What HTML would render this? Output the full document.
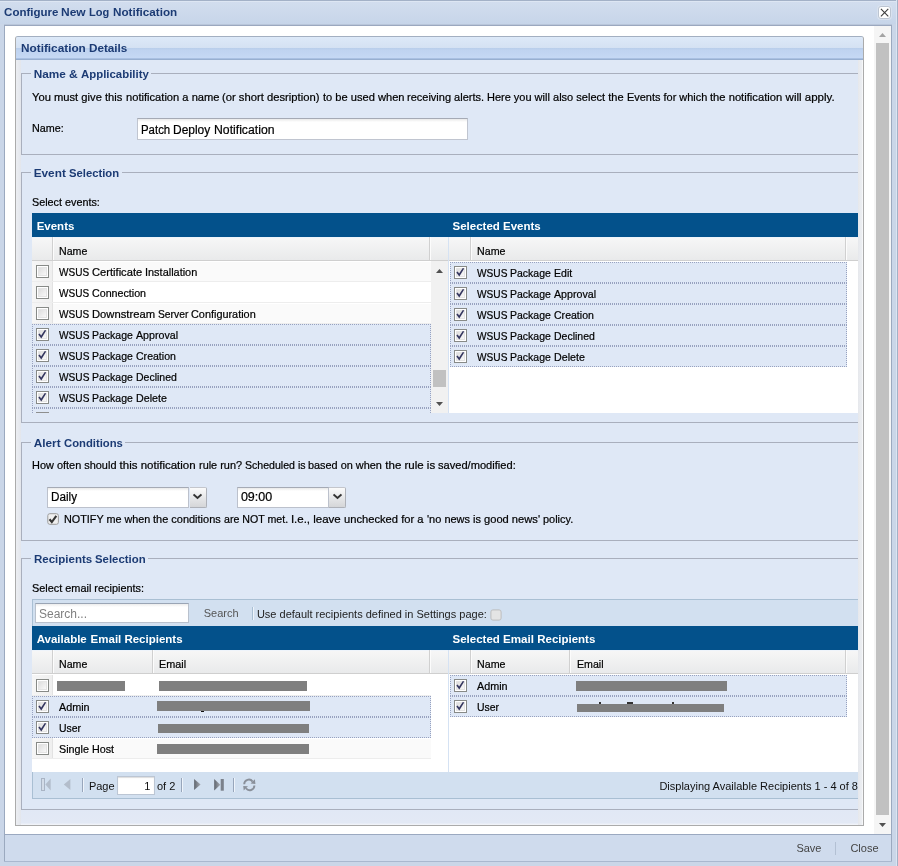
<!DOCTYPE html>
<html><head><meta charset="utf-8"><title>Configure New Log Notification</title>
<style>
html,body{margin:0;padding:0;background:#cad6e8;overflow:hidden}
#w{position:relative;width:898px;height:866px;overflow:hidden;font-family:'Liberation Sans',sans-serif;}
#w div{position:absolute}
#w span{position:absolute;will-change:opacity;transform-origin:0 0;white-space:pre;line-height:20px;height:20px;font-family:'Liberation Sans',sans-serif;}
</style></head><body><div id="w">
<div style="left:0px;top:0px;width:898px;height:866px;background:#cad6e8"></div>
<div style="left:0px;top:0px;width:898px;height:1px;background:#a3b1c7"></div>
<div style="left:0px;top:1px;width:898px;height:1px;background:#dde6f3"></div>
<div style="left:0px;top:2px;width:898px;height:22px;background:linear-gradient(#d2ddee,#c7d5e9)"></div>
<div style="left:4px;top:24px;width:888px;height:1px;background:#b9c6da"></div>
<div style="left:4px;top:25px;width:888px;height:1px;background:#9ba8bf"></div>
<div style="left:4px;top:26px;width:1px;height:836px;background:#9ba9bf"></div>
<div style="left:891px;top:26px;width:1px;height:836px;background:#9ba9bf"></div>
<div style="left:5px;top:26px;width:886px;height:808px;background:#fff"></div>
<div style="left:5px;top:834px;width:886px;height:28px;background:#cfdbed"></div>
<div style="left:5px;top:834px;width:886px;height:1px;background:#9ba9c0"></div>
<div style="left:4px;top:861px;width:888px;height:1px;background:#a9b8cf"></div>
<div style="left:896px;top:0px;width:1px;height:866px;background:#dbe5f2"></div>
<div style="left:897px;top:0px;width:1px;height:866px;background:#a3b1c7"></div>
<div style="left:877.7px;top:5.7px;width:13.6px;height:13.6px;background:#fff;border-radius:3px;border:1px solid #bcc5d2;box-sizing:border-box;box-shadow:0 0 0 1px #d9e2ef"><svg width="13" height="13" viewBox="0 0 13 13" style="position:absolute;left:-0.7px;top:-0.7px"><path d="M2.9 2.9 L10.3 10.3 M10.3 2.9 L2.9 10.3" stroke="#3c3c3c" stroke-width="1.1" fill="none"/></svg></div>
<div style="left:874px;top:26px;width:17px;height:808px;background:#f5f5f5"></div>
<div style="left:876px;top:43px;width:13px;height:772px;background:#c1c1c1"></div>
<svg style="position:absolute;left:879px;top:33px" width="7" height="4"><path d="M0 4 L3.5 0 L7 4 Z" fill="#a3a3a3"/></svg>
<svg style="position:absolute;left:879px;top:823px" width="7" height="4"><path d="M0 0 L3.5 4 L7 0 Z" fill="#505050"/></svg>
<div style="left:835px;top:842px;width:1px;height:13px;background:#b3c0d3"></div>
<div style="left:15px;top:36px;width:849px;height:790px;background:#dfe8f6;border:1px solid #ababab;border-top-color:#a3afc1;box-sizing:border-box;border-radius:3px 3px 0 0"></div>
<div style="left:16px;top:60px;width:5px;height:765px;background:linear-gradient(90deg,#eceef2,#e3e6ec)"></div>
<div style="left:858px;top:60px;width:5px;height:765px;background:linear-gradient(90deg,#e6e8ec,#eceef2 80%,#fff)"></div>
<div style="left:21px;top:810px;width:837px;height:15px;background:linear-gradient(#e1e8f5,#e3e9f5 85%,#f4f6fa)"></div>
<div style="left:16px;top:37px;width:847px;height:11px;background:linear-gradient(#dde9f8,#d4e1f3);border-radius:2px 2px 0 0"></div>
<div style="left:16px;top:48px;width:847px;height:11px;background:linear-gradient(#b8cdea,#bfd3f0 20%,#c6d9f5)"></div>
<div style="left:16px;top:58px;width:847px;height:1px;background:#a9c0e2"></div>
<div style="left:16px;top:59px;width:847px;height:1px;background:#98afd0"></div>
<div style="left:21px;top:73px;width:837px;height:82px;border:1px solid #a9afbd;border-right:none;box-sizing:border-box;background:#dfe8f6"></div>
<div style="left:31.299999999999997px;top:71px;width:120.2px;height:5px;background:#dfe8f6"></div>
<div style="left:21px;top:172px;width:837px;height:251px;border:1px solid #a9afbd;border-right:none;box-sizing:border-box;background:#dfe8f6"></div>
<div style="left:31.299999999999997px;top:170px;width:90.7px;height:5px;background:#dfe8f6"></div>
<div style="left:21px;top:441.5px;width:837px;height:99.5px;border:1px solid #a9afbd;border-right:none;box-sizing:border-box;background:#dfe8f6"></div>
<div style="left:31.299999999999997px;top:439.5px;width:93.95px;height:5px;background:#dfe8f6"></div>
<div style="left:21px;top:558px;width:837px;height:252px;border:1px solid #a9afbd;border-right:none;box-sizing:border-box;background:#dfe8f6"></div>
<div style="left:31.299999999999997px;top:556px;width:116.95px;height:5px;background:#dfe8f6"></div>
<div style="left:137px;top:118px;width:331px;height:22px;background:linear-gradient(#e9e9e9,#fff 3px);border:1px solid #c0c5d0;border-top-color:#a5aab5;box-sizing:border-box"></div>
<div style="left:32px;top:237px;width:826px;height:176px;background:#fff"></div>
<div style="left:32px;top:213px;width:826px;height:24px;background:#03518b"></div>
<div style="left:32px;top:237px;width:416px;height:24px;background:linear-gradient(#f7f7f7,#e9eaeb);border-bottom:1px solid #cfcfcf;box-sizing:border-box"></div>
<div style="left:32px;top:237px;width:416px;height:1px;background:#eef4fb"></div>
<div style="left:52px;top:237px;width:1px;height:23px;background:#d0d0d0"></div>
<div style="left:53px;top:237px;width:1px;height:23px;background:#fcfcfc"></div>
<div style="left:429px;top:237px;width:1px;height:23px;background:#d0d0d0"></div>
<div style="left:430px;top:237px;width:1px;height:23px;background:#fcfcfc"></div>
<div style="left:32px;top:261px;width:399px;height:21px;background:#fafafa;border-top:1px solid #fff;border-bottom:1px solid #ededed;box-sizing:border-box"></div>
<div style="left:32px;top:261px;width:21px;height:20px;background:linear-gradient(90deg,#f6f6f6,#efefef);border-right:1px solid #e2e2e2;box-sizing:border-box"></div>
<svg style="position:absolute;left:36px;top:265px" width="13" height="13" viewBox="0 0 13 13"><defs><linearGradient id="cg" x1="0" y1="0" x2="1" y2="1"><stop offset="0" stop-color="#dcdcdc"/><stop offset="1" stop-color="#fafafa"/></linearGradient></defs><rect x="0.5" y="0.5" width="12" height="12" fill="#fff" stroke="#878a87"/><rect x="2.5" y="2.5" width="8" height="8" fill="url(#cg)" stroke="#e4e4e4"/></svg>
<div style="left:32px;top:282px;width:399px;height:21px;background:#fff;border-top:1px solid #fff;border-bottom:1px solid #ededed;box-sizing:border-box"></div>
<div style="left:32px;top:282px;width:21px;height:20px;background:linear-gradient(90deg,#f6f6f6,#efefef);border-right:1px solid #e2e2e2;box-sizing:border-box"></div>
<svg style="position:absolute;left:36px;top:286px" width="13" height="13" viewBox="0 0 13 13"><defs><linearGradient id="cg" x1="0" y1="0" x2="1" y2="1"><stop offset="0" stop-color="#dcdcdc"/><stop offset="1" stop-color="#fafafa"/></linearGradient></defs><rect x="0.5" y="0.5" width="12" height="12" fill="#fff" stroke="#878a87"/><rect x="2.5" y="2.5" width="8" height="8" fill="url(#cg)" stroke="#e4e4e4"/></svg>
<div style="left:32px;top:303px;width:399px;height:21px;background:#fafafa;border-top:1px solid #fff;border-bottom:1px solid #ededed;box-sizing:border-box"></div>
<div style="left:32px;top:303px;width:21px;height:20px;background:linear-gradient(90deg,#f6f6f6,#efefef);border-right:1px solid #e2e2e2;box-sizing:border-box"></div>
<svg style="position:absolute;left:36px;top:307px" width="13" height="13" viewBox="0 0 13 13"><defs><linearGradient id="cg" x1="0" y1="0" x2="1" y2="1"><stop offset="0" stop-color="#dcdcdc"/><stop offset="1" stop-color="#fafafa"/></linearGradient></defs><rect x="0.5" y="0.5" width="12" height="12" fill="#fff" stroke="#878a87"/><rect x="2.5" y="2.5" width="8" height="8" fill="url(#cg)" stroke="#e4e4e4"/></svg>
<div style="left:32px;top:324px;width:399px;height:21px;background:#dfe8f6;border:1px dotted #98a2bf;box-sizing:border-box"></div>
<svg style="position:absolute;left:36px;top:328px" width="13" height="13" viewBox="0 0 13 13"><defs><linearGradient id="cg" x1="0" y1="0" x2="1" y2="1"><stop offset="0" stop-color="#dcdcdc"/><stop offset="1" stop-color="#fafafa"/></linearGradient></defs><rect x="0.5" y="0.5" width="12" height="12" fill="#fff" stroke="#878a87"/><rect x="2.5" y="2.5" width="8" height="8" fill="url(#cg)" stroke="#e4e4e4"/><path d="M2.3 6.4 L3.7 5.4 L5.1 7.4 L8.8 1.9 L10.2 2.6 L5.3 10.5 Z" fill="#34365f"/></svg>
<div style="left:32px;top:345px;width:399px;height:21px;background:#dfe8f6;border:1px dotted #98a2bf;box-sizing:border-box"></div>
<svg style="position:absolute;left:36px;top:349px" width="13" height="13" viewBox="0 0 13 13"><defs><linearGradient id="cg" x1="0" y1="0" x2="1" y2="1"><stop offset="0" stop-color="#dcdcdc"/><stop offset="1" stop-color="#fafafa"/></linearGradient></defs><rect x="0.5" y="0.5" width="12" height="12" fill="#fff" stroke="#878a87"/><rect x="2.5" y="2.5" width="8" height="8" fill="url(#cg)" stroke="#e4e4e4"/><path d="M2.3 6.4 L3.7 5.4 L5.1 7.4 L8.8 1.9 L10.2 2.6 L5.3 10.5 Z" fill="#34365f"/></svg>
<div style="left:32px;top:366px;width:399px;height:21px;background:#dfe8f6;border:1px dotted #98a2bf;box-sizing:border-box"></div>
<svg style="position:absolute;left:36px;top:370px" width="13" height="13" viewBox="0 0 13 13"><defs><linearGradient id="cg" x1="0" y1="0" x2="1" y2="1"><stop offset="0" stop-color="#dcdcdc"/><stop offset="1" stop-color="#fafafa"/></linearGradient></defs><rect x="0.5" y="0.5" width="12" height="12" fill="#fff" stroke="#878a87"/><rect x="2.5" y="2.5" width="8" height="8" fill="url(#cg)" stroke="#e4e4e4"/><path d="M2.3 6.4 L3.7 5.4 L5.1 7.4 L8.8 1.9 L10.2 2.6 L5.3 10.5 Z" fill="#34365f"/></svg>
<div style="left:32px;top:387px;width:399px;height:21px;background:#dfe8f6;border:1px dotted #98a2bf;box-sizing:border-box"></div>
<svg style="position:absolute;left:36px;top:391px" width="13" height="13" viewBox="0 0 13 13"><defs><linearGradient id="cg" x1="0" y1="0" x2="1" y2="1"><stop offset="0" stop-color="#dcdcdc"/><stop offset="1" stop-color="#fafafa"/></linearGradient></defs><rect x="0.5" y="0.5" width="12" height="12" fill="#fff" stroke="#878a87"/><rect x="2.5" y="2.5" width="8" height="8" fill="url(#cg)" stroke="#e4e4e4"/><path d="M2.3 6.4 L3.7 5.4 L5.1 7.4 L8.8 1.9 L10.2 2.6 L5.3 10.5 Z" fill="#34365f"/></svg>
<div style="left:32px;top:408px;width:399px;height:5px;background:#dfe8f6;border-top:1px dotted #98a2bf;border-left:1px dotted #98a2bf;border-right:1px dotted #98a2bf;box-sizing:border-box"></div>
<div style="left:36px;top:412px;width:13px;height:1px;background:#8e8f8f"></div>
<div style="left:431px;top:261px;width:17px;height:152px;background:#f1f1f1"></div>
<svg style="position:absolute;left:436px;top:269px" width="7" height="4"><path d="M0 4 L3.5 0 L7 4 Z" fill="#505050"/></svg>
<svg style="position:absolute;left:436px;top:402px" width="7" height="4"><path d="M0 0 L3.5 4 L7 0 Z" fill="#505050"/></svg>
<div style="left:433px;top:370px;width:13px;height:17px;background:#c1c1c1"></div>
<div style="left:448px;top:237px;width:1px;height:176px;background:#d5e2f3"></div>
<div style="left:449px;top:237px;width:409px;height:24px;background:linear-gradient(#f7f7f7,#e9eaeb);border-bottom:1px solid #cfcfcf;box-sizing:border-box"></div>
<div style="left:449px;top:237px;width:409px;height:1px;background:#eef4fb"></div>
<div style="left:470px;top:237px;width:1px;height:23px;background:#d0d0d0"></div>
<div style="left:471px;top:237px;width:1px;height:23px;background:#fcfcfc"></div>
<div style="left:845px;top:237px;width:1px;height:23px;background:#d0d0d0"></div>
<div style="left:846px;top:237px;width:1px;height:23px;background:#fcfcfc"></div>
<div style="left:450px;top:262px;width:397px;height:21px;background:#dfe8f6;border:1px dotted #98a2bf;box-sizing:border-box"></div>
<svg style="position:absolute;left:454px;top:266px" width="13" height="13" viewBox="0 0 13 13"><defs><linearGradient id="cg" x1="0" y1="0" x2="1" y2="1"><stop offset="0" stop-color="#dcdcdc"/><stop offset="1" stop-color="#fafafa"/></linearGradient></defs><rect x="0.5" y="0.5" width="12" height="12" fill="#fff" stroke="#878a87"/><rect x="2.5" y="2.5" width="8" height="8" fill="url(#cg)" stroke="#e4e4e4"/><path d="M2.3 6.4 L3.7 5.4 L5.1 7.4 L8.8 1.9 L10.2 2.6 L5.3 10.5 Z" fill="#34365f"/></svg>
<div style="left:450px;top:283px;width:397px;height:21px;background:#dfe8f6;border:1px dotted #98a2bf;box-sizing:border-box"></div>
<svg style="position:absolute;left:454px;top:287px" width="13" height="13" viewBox="0 0 13 13"><defs><linearGradient id="cg" x1="0" y1="0" x2="1" y2="1"><stop offset="0" stop-color="#dcdcdc"/><stop offset="1" stop-color="#fafafa"/></linearGradient></defs><rect x="0.5" y="0.5" width="12" height="12" fill="#fff" stroke="#878a87"/><rect x="2.5" y="2.5" width="8" height="8" fill="url(#cg)" stroke="#e4e4e4"/><path d="M2.3 6.4 L3.7 5.4 L5.1 7.4 L8.8 1.9 L10.2 2.6 L5.3 10.5 Z" fill="#34365f"/></svg>
<div style="left:450px;top:304px;width:397px;height:21px;background:#dfe8f6;border:1px dotted #98a2bf;box-sizing:border-box"></div>
<svg style="position:absolute;left:454px;top:308px" width="13" height="13" viewBox="0 0 13 13"><defs><linearGradient id="cg" x1="0" y1="0" x2="1" y2="1"><stop offset="0" stop-color="#dcdcdc"/><stop offset="1" stop-color="#fafafa"/></linearGradient></defs><rect x="0.5" y="0.5" width="12" height="12" fill="#fff" stroke="#878a87"/><rect x="2.5" y="2.5" width="8" height="8" fill="url(#cg)" stroke="#e4e4e4"/><path d="M2.3 6.4 L3.7 5.4 L5.1 7.4 L8.8 1.9 L10.2 2.6 L5.3 10.5 Z" fill="#34365f"/></svg>
<div style="left:450px;top:325px;width:397px;height:21px;background:#dfe8f6;border:1px dotted #98a2bf;box-sizing:border-box"></div>
<svg style="position:absolute;left:454px;top:329px" width="13" height="13" viewBox="0 0 13 13"><defs><linearGradient id="cg" x1="0" y1="0" x2="1" y2="1"><stop offset="0" stop-color="#dcdcdc"/><stop offset="1" stop-color="#fafafa"/></linearGradient></defs><rect x="0.5" y="0.5" width="12" height="12" fill="#fff" stroke="#878a87"/><rect x="2.5" y="2.5" width="8" height="8" fill="url(#cg)" stroke="#e4e4e4"/><path d="M2.3 6.4 L3.7 5.4 L5.1 7.4 L8.8 1.9 L10.2 2.6 L5.3 10.5 Z" fill="#34365f"/></svg>
<div style="left:450px;top:346px;width:397px;height:21px;background:#dfe8f6;border:1px dotted #98a2bf;box-sizing:border-box"></div>
<svg style="position:absolute;left:454px;top:350px" width="13" height="13" viewBox="0 0 13 13"><defs><linearGradient id="cg" x1="0" y1="0" x2="1" y2="1"><stop offset="0" stop-color="#dcdcdc"/><stop offset="1" stop-color="#fafafa"/></linearGradient></defs><rect x="0.5" y="0.5" width="12" height="12" fill="#fff" stroke="#878a87"/><rect x="2.5" y="2.5" width="8" height="8" fill="url(#cg)" stroke="#e4e4e4"/><path d="M2.3 6.4 L3.7 5.4 L5.1 7.4 L8.8 1.9 L10.2 2.6 L5.3 10.5 Z" fill="#34365f"/></svg>
<div style="left:47.2px;top:486.5px;width:142.3px;height:21px;background:linear-gradient(#e9e9e9,#fff 3px);border:1px solid #bcc1cc;border-top-color:#a5aab5;box-sizing:border-box"></div>
<div style="left:189.5px;top:486.5px;width:17px;height:21px;background:linear-gradient(#fbfbfb,#e3e4e6 60%,#d5d6d8);border:1px solid #aeb1b8;border-top-color:#c4c6cc;border-left:none;box-sizing:border-box;border-radius:0 2px 2px 0"></div>
<svg style="position:absolute;left:193.0px;top:492.5px" width="9" height="7" viewBox="0 0 9 7"><path d="M0.5 1.4 L4.5 5 L8.5 1.4" stroke="#333" stroke-width="2" fill="none"/></svg>
<div style="left:237.2px;top:486.5px;width:92px;height:21px;background:linear-gradient(#e9e9e9,#fff 3px);border:1px solid #bcc1cc;border-top-color:#a5aab5;box-sizing:border-box"></div>
<div style="left:329.2px;top:486.5px;width:17px;height:21px;background:linear-gradient(#fbfbfb,#e3e4e6 60%,#d5d6d8);border:1px solid #aeb1b8;border-top-color:#c4c6cc;border-left:none;box-sizing:border-box;border-radius:0 2px 2px 0"></div>
<svg style="position:absolute;left:332.7px;top:492.5px" width="9" height="7" viewBox="0 0 9 7"><path d="M0.5 1.4 L4.5 5 L8.5 1.4" stroke="#333" stroke-width="2" fill="none"/></svg>
<svg style="position:absolute;left:47px;top:513px" width="12" height="12" viewBox="0 0 12 12"><rect x="0.8" y="0.7" width="10.6" height="10.6" rx="2" fill="#efefef" stroke="#9c9c9c"/><path d="M2.5 6.3 L4.8 9 L9.3 2.9" stroke="#353535" stroke-width="2.1" fill="none"/></svg>
<div style="left:32px;top:599px;width:826px;height:27px;background:#d2e0f0;border-top:1px solid #a9bfd3;border-left:1px solid #a9bfd3;box-sizing:border-box"></div>
<div style="left:35px;top:603px;width:154px;height:20px;background:linear-gradient(#ececec,#fff 3px);border:1px solid #b9c1cd;border-top-color:#9aa5b5;box-sizing:border-box"></div>
<div style="left:252px;top:607px;width:1px;height:13px;background:#a9bfd3"></div>
<div style="left:253px;top:607px;width:1px;height:13px;background:#eef4fb"></div>
<svg style="position:absolute;left:490px;top:609px" width="12" height="12" viewBox="0 0 12 12"><rect x="0.9" y="0.9" width="10.2" height="10.2" rx="2" fill="#e4e4e4" stroke="#bdbdbd"/></svg>
<div style="left:32px;top:650px;width:826px;height:122px;background:#fff"></div>
<div style="left:32px;top:626px;width:826px;height:24px;background:#03518b"></div>
<div style="left:32px;top:650px;width:416px;height:24px;background:linear-gradient(#f7f7f7,#e9eaeb);border-bottom:1px solid #cfcfcf;box-sizing:border-box"></div>
<div style="left:32px;top:650px;width:416px;height:1px;background:#eef4fb"></div>
<div style="left:52px;top:650px;width:1px;height:23px;background:#d0d0d0"></div>
<div style="left:53px;top:650px;width:1px;height:23px;background:#fcfcfc"></div>
<div style="left:152px;top:650px;width:1px;height:23px;background:#d0d0d0"></div>
<div style="left:153px;top:650px;width:1px;height:23px;background:#fcfcfc"></div>
<div style="left:429px;top:650px;width:1px;height:23px;background:#d0d0d0"></div>
<div style="left:430px;top:650px;width:1px;height:23px;background:#fcfcfc"></div>
<div style="left:32px;top:675px;width:399px;height:21px;background:#fff;border-top:1px solid #fff;border-bottom:1px solid #ededed;box-sizing:border-box"></div>
<div style="left:32px;top:675px;width:21px;height:20px;background:linear-gradient(90deg,#f6f6f6,#efefef);border-right:1px solid #e2e2e2;box-sizing:border-box"></div>
<svg style="position:absolute;left:36px;top:679px" width="13" height="13" viewBox="0 0 13 13"><defs><linearGradient id="cg" x1="0" y1="0" x2="1" y2="1"><stop offset="0" stop-color="#dcdcdc"/><stop offset="1" stop-color="#fafafa"/></linearGradient></defs><rect x="0.5" y="0.5" width="12" height="12" fill="#fff" stroke="#878a87"/><rect x="2.5" y="2.5" width="8" height="8" fill="url(#cg)" stroke="#e4e4e4"/></svg>
<div style="left:57px;top:681px;width:68px;height:10px;background:#7f7f7f"></div>
<div style="left:159px;top:681px;width:148px;height:10px;background:#7f7f7f"></div>
<div style="left:32px;top:696px;width:399px;height:21px;background:#dfe8f6;border:1px dotted #98a2bf;box-sizing:border-box"></div>
<svg style="position:absolute;left:36px;top:700px" width="13" height="13" viewBox="0 0 13 13"><defs><linearGradient id="cg" x1="0" y1="0" x2="1" y2="1"><stop offset="0" stop-color="#dcdcdc"/><stop offset="1" stop-color="#fafafa"/></linearGradient></defs><rect x="0.5" y="0.5" width="12" height="12" fill="#fff" stroke="#878a87"/><rect x="2.5" y="2.5" width="8" height="8" fill="url(#cg)" stroke="#e4e4e4"/><path d="M2.3 6.4 L3.7 5.4 L5.1 7.4 L8.8 1.9 L10.2 2.6 L5.3 10.5 Z" fill="#34365f"/></svg>
<div style="left:157px;top:701px;width:153px;height:10px;background:#7f7f7f"></div>
<div style="left:32px;top:717px;width:399px;height:21px;background:#dfe8f6;border:1px dotted #98a2bf;box-sizing:border-box"></div>
<svg style="position:absolute;left:36px;top:721px" width="13" height="13" viewBox="0 0 13 13"><defs><linearGradient id="cg" x1="0" y1="0" x2="1" y2="1"><stop offset="0" stop-color="#dcdcdc"/><stop offset="1" stop-color="#fafafa"/></linearGradient></defs><rect x="0.5" y="0.5" width="12" height="12" fill="#fff" stroke="#878a87"/><rect x="2.5" y="2.5" width="8" height="8" fill="url(#cg)" stroke="#e4e4e4"/><path d="M2.3 6.4 L3.7 5.4 L5.1 7.4 L8.8 1.9 L10.2 2.6 L5.3 10.5 Z" fill="#34365f"/></svg>
<div style="left:158px;top:723.5px;width:151px;height:9.5px;background:#7f7f7f"></div>
<div style="left:32px;top:738px;width:399px;height:21px;background:#fafafa;border-top:1px solid #fff;border-bottom:1px solid #ededed;box-sizing:border-box"></div>
<div style="left:32px;top:738px;width:21px;height:20px;background:linear-gradient(90deg,#f6f6f6,#efefef);border-right:1px solid #e2e2e2;box-sizing:border-box"></div>
<svg style="position:absolute;left:36px;top:742px" width="13" height="13" viewBox="0 0 13 13"><defs><linearGradient id="cg" x1="0" y1="0" x2="1" y2="1"><stop offset="0" stop-color="#dcdcdc"/><stop offset="1" stop-color="#fafafa"/></linearGradient></defs><rect x="0.5" y="0.5" width="12" height="12" fill="#fff" stroke="#878a87"/><rect x="2.5" y="2.5" width="8" height="8" fill="url(#cg)" stroke="#e4e4e4"/></svg>
<div style="left:157px;top:744px;width:152px;height:10px;background:#7f7f7f"></div>
<div style="left:201px;top:711px;width:3px;height:1px;background:#111"></div>
<div style="left:448px;top:650px;width:1px;height:122px;background:#d5e2f3"></div>
<div style="left:449px;top:650px;width:409px;height:24px;background:linear-gradient(#f7f7f7,#e9eaeb);border-bottom:1px solid #cfcfcf;box-sizing:border-box"></div>
<div style="left:449px;top:650px;width:409px;height:1px;background:#eef4fb"></div>
<div style="left:470px;top:650px;width:1px;height:23px;background:#d0d0d0"></div>
<div style="left:471px;top:650px;width:1px;height:23px;background:#fcfcfc"></div>
<div style="left:569px;top:650px;width:1px;height:23px;background:#d0d0d0"></div>
<div style="left:570px;top:650px;width:1px;height:23px;background:#fcfcfc"></div>
<div style="left:845px;top:650px;width:1px;height:23px;background:#d0d0d0"></div>
<div style="left:846px;top:650px;width:1px;height:23px;background:#fcfcfc"></div>
<div style="left:450px;top:675px;width:397px;height:21px;background:#dfe8f6;border:1px dotted #98a2bf;box-sizing:border-box"></div>
<svg style="position:absolute;left:454px;top:679px" width="13" height="13" viewBox="0 0 13 13"><defs><linearGradient id="cg" x1="0" y1="0" x2="1" y2="1"><stop offset="0" stop-color="#dcdcdc"/><stop offset="1" stop-color="#fafafa"/></linearGradient></defs><rect x="0.5" y="0.5" width="12" height="12" fill="#fff" stroke="#878a87"/><rect x="2.5" y="2.5" width="8" height="8" fill="url(#cg)" stroke="#e4e4e4"/><path d="M2.3 6.4 L3.7 5.4 L5.1 7.4 L8.8 1.9 L10.2 2.6 L5.3 10.5 Z" fill="#34365f"/></svg>
<div style="left:576px;top:681px;width:151px;height:9.5px;background:#7f7f7f"></div>
<div style="left:450px;top:696px;width:397px;height:21px;background:#dfe8f6;border:1px dotted #98a2bf;box-sizing:border-box"></div>
<svg style="position:absolute;left:454px;top:700px" width="13" height="13" viewBox="0 0 13 13"><defs><linearGradient id="cg" x1="0" y1="0" x2="1" y2="1"><stop offset="0" stop-color="#dcdcdc"/><stop offset="1" stop-color="#fafafa"/></linearGradient></defs><rect x="0.5" y="0.5" width="12" height="12" fill="#fff" stroke="#878a87"/><rect x="2.5" y="2.5" width="8" height="8" fill="url(#cg)" stroke="#e4e4e4"/><path d="M2.3 6.4 L3.7 5.4 L5.1 7.4 L8.8 1.9 L10.2 2.6 L5.3 10.5 Z" fill="#34365f"/></svg>
<div style="left:577px;top:703.5px;width:147px;height:8.5px;background:#7f7f7f"></div>
<div style="left:599px;top:701.5px;width:2px;height:2px;background:#333"></div>
<div style="left:627px;top:701.5px;width:6px;height:2px;background:#333"></div>
<div style="left:672px;top:701.5px;width:2px;height:2px;background:#333"></div>
<div style="left:32px;top:772px;width:826px;height:27px;background:#d2e0f0;border-bottom:1px solid #a9bfd3;border-left:1px solid #a9bfd3;box-sizing:border-box"></div>
<svg style="position:absolute;left:41px;top:778px" width="10" height="13" viewBox="0 0 10 13"><rect x="0.5" y="0.5" width="3" height="12" fill="#d3dce8" stroke="#a9b4c4"/><path d="M9.7 0.5 L9.7 12.5 L4.4 6.5 Z" fill="#b3bdcb"/></svg>
<svg style="position:absolute;left:63px;top:778px" width="8" height="13" viewBox="0 0 8 13"><path d="M7.4 1 L7.4 12 L0.8 6.5 Z" fill="#b3bdcb"/></svg>
<div style="left:82px;top:778px;width:1px;height:14px;background:#98a6bb"></div>
<div style="left:83px;top:778px;width:1px;height:14px;background:#eef4fb"></div>
<div style="left:117px;top:776px;width:38px;height:19px;background:#fff;border:1px solid #bcc6d4;box-sizing:border-box;box-shadow:inset 0 1px 1px #ddd"></div>
<div style="left:181px;top:778px;width:1px;height:14px;background:#98a6bb"></div>
<div style="left:182px;top:778px;width:1px;height:14px;background:#eef4fb"></div>
<svg style="position:absolute;left:194px;top:778px" width="8" height="13" viewBox="0 0 8 13"><defs><linearGradient id="ig" x1="0" y1="0" x2="1" y2="0"><stop offset="0" stop-color="#5f656e"/><stop offset="1" stop-color="#a4a9b1"/></linearGradient></defs><path d="M0.1 1 L0.1 12 L6.6 6.5 Z" fill="url(#ig)"/></svg>
<svg style="position:absolute;left:214px;top:778px" width="10" height="13" viewBox="0 0 10 13"><path d="M0.2 1 L0.2 12.5 L6.3 6.7 Z" fill="url(#ig)"/><rect x="6.7" y="1" width="3.1" height="11.7" fill="#7b818b"/></svg>
<div style="left:233px;top:778px;width:1px;height:14px;background:#98a6bb"></div>
<div style="left:234px;top:778px;width:1px;height:14px;background:#eef4fb"></div>
<svg style="position:absolute;left:242px;top:778px" width="15" height="14" viewBox="0 0 15 14"><g fill="none" stroke="#8a909a" stroke-width="1.9"><path d="M2.2 6.2 A4.6 4.6 0 0 1 10.6 3.6"/><path d="M12.4 7.6 A4.6 4.6 0 0 1 4 10.2"/></g><path d="M8.6 5.6 L13.4 5.9 L12.9 1.2 Z" fill="#8a909a"/><path d="M6 8.2 L1.2 7.9 L1.7 12.6 Z" fill="#8a909a"/></svg>
<span style="left:4.10px;top:2.00px;font-size:11.5px;font-weight:700;color:#1c3b74;">Configure </span>
<span style="left:61.37px;top:2.00px;font-size:11.5px;font-weight:700;color:#1c3b74;transform:scaleX(1.0431);">New </span>
<span style="left:89.42px;top:2.00px;font-size:11.5px;font-weight:700;color:#1c3b74;transform:scaleX(0.9596);">Log </span>
<span style="left:112.69px;top:2.00px;font-size:11.5px;font-weight:700;color:#1c3b74;transform:scaleX(1.0160);">Notification</span>
<span style="left:796.40px;top:838.30px;font-size:11px;font-weight:400;color:#444;">Save</span>
<span style="left:850.40px;top:838.30px;font-size:11px;font-weight:400;color:#444;">Close</span>
<span style="left:20.99px;top:38.00px;font-size:11.5px;font-weight:700;color:#1c3b74;transform:scaleX(1.0248);">Notification </span>
<span style="left:89.09px;top:38.00px;font-size:11.5px;font-weight:700;color:#1c3b74;transform:scaleX(1.0171);">Details</span>
<span style="left:33.70px;top:64.00px;font-size:11.8px;font-weight:700;color:#1c3b74;">Name </span>
<span style="left:69.09px;top:64.00px;font-size:11.8px;font-weight:700;color:#1c3b74;transform:scaleX(1.0159);">&amp; </span>
<span style="left:81.12px;top:64.00px;font-size:11.8px;font-weight:700;color:#1c3b74;transform:scaleX(0.9672);">Applicability</span>
<span style="left:33.70px;top:163.00px;font-size:11.8px;font-weight:700;color:#1c3b74;">Event </span>
<span style="left:69.33px;top:163.00px;font-size:11.8px;font-weight:700;color:#1c3b74;transform:scaleX(0.9556);">Selection</span>
<span style="left:33.70px;top:432.50px;font-size:11.8px;font-weight:700;color:#1c3b74;">Alert </span>
<span style="left:63.83px;top:432.50px;font-size:11.8px;font-weight:700;color:#1c3b74;transform:scaleX(0.9556);">Conditions</span>
<span style="left:33.71px;top:549.00px;font-size:11.8px;font-weight:700;color:#1c3b74;transform:scaleX(0.9756);">Recipients </span>
<span style="left:95.12px;top:549.00px;font-size:11.8px;font-weight:700;color:#1c3b74;transform:scaleX(0.9644);">Selection</span>
<span style="left:32.12px;top:87.00px;font-size:11.5px;font-weight:400;color:#000;transform:scaleX(0.9728);-webkit-text-stroke:0.22px currentColor;">You must give this </span>
<span style="left:125.62px;top:87.00px;font-size:11.5px;font-weight:400;color:#000;transform:scaleX(0.9686);-webkit-text-stroke:0.22px currentColor;">notification a name </span>
<span style="left:222.21px;top:87.00px;font-size:11.5px;font-weight:400;color:#000;transform:scaleX(0.9766);-webkit-text-stroke:0.22px currentColor;">(or short desription) </span>
<span style="left:322.72px;top:87.00px;font-size:11.5px;font-weight:400;color:#000;transform:scaleX(0.9658);-webkit-text-stroke:0.22px currentColor;">to be used when </span>
<span style="left:407.33px;top:87.00px;font-size:11.5px;font-weight:400;color:#000;transform:scaleX(0.9566);-webkit-text-stroke:0.22px currentColor;">receiving alerts. </span>
<span style="left:487.43px;top:87.00px;font-size:11.5px;font-weight:400;color:#000;transform:scaleX(0.9546);-webkit-text-stroke:0.22px currentColor;">Here you will </span>
<span style="left:553.32px;top:87.00px;font-size:11.5px;font-weight:400;color:#000;transform:scaleX(0.9593);-webkit-text-stroke:0.22px currentColor;">also select the </span>
<span style="left:626.93px;top:87.00px;font-size:11.5px;font-weight:400;color:#000;transform:scaleX(0.9523);-webkit-text-stroke:0.22px currentColor;">Events for which </span>
<span style="left:710.32px;top:87.00px;font-size:11.5px;font-weight:400;color:#000;transform:scaleX(0.9734);-webkit-text-stroke:0.22px currentColor;">the notification </span>
<span style="left:785.60px;top:87.00px;font-size:11.5px;font-weight:400;color:#000;-webkit-text-stroke:0.22px currentColor;">will apply.</span>
<span style="left:31.94px;top:117.50px;font-size:11.5px;font-weight:400;color:#000;transform:scaleX(0.9367);-webkit-text-stroke:0.22px currentColor;">Name:</span>
<span style="left:140.75px;top:119.50px;font-size:12.5px;font-weight:400;color:#000;transform:scaleX(0.9143);-webkit-text-stroke:0.22px currentColor;">Patch </span>
<span style="left:173.13px;top:119.50px;font-size:12.5px;font-weight:400;color:#000;transform:scaleX(0.9578);-webkit-text-stroke:0.22px currentColor;">Deploy </span>
<span style="left:213.71px;top:119.50px;font-size:12.5px;font-weight:400;color:#000;transform:scaleX(0.9785);-webkit-text-stroke:0.22px currentColor;">Notification</span>
<span style="left:31.94px;top:192.00px;font-size:11.5px;font-weight:400;color:#000;transform:scaleX(0.9383);-webkit-text-stroke:0.22px currentColor;">Select events:</span>
<span style="left:36.65px;top:216.30px;font-size:11.5px;font-weight:700;color:#fff;">Events</span>
<span style="left:452.50px;top:216.30px;font-size:11.5px;font-weight:700;color:#fff;">Selected </span>
<span style="left:503.00px;top:216.30px;font-size:11.5px;font-weight:700;color:#fff;">Events</span>
<span style="left:58.85px;top:240.60px;font-size:11.5px;font-weight:400;color:#000;transform:scaleX(0.9227);-webkit-text-stroke:0.22px currentColor;">Name</span>
<span style="left:58.98px;top:262.00px;font-size:11.5px;font-weight:400;color:#000;transform:scaleX(0.8726);-webkit-text-stroke:0.22px currentColor;">WSUS </span>
<span style="left:91.82px;top:262.00px;font-size:11.5px;font-weight:400;color:#000;transform:scaleX(0.9696);-webkit-text-stroke:0.22px currentColor;">Certificate </span>
<span style="left:145.13px;top:262.00px;font-size:11.5px;font-weight:400;color:#000;transform:scaleX(0.9511);-webkit-text-stroke:0.22px currentColor;">Installation</span>
<span style="left:58.98px;top:283.00px;font-size:11.5px;font-weight:400;color:#000;transform:scaleX(0.8726);-webkit-text-stroke:0.22px currentColor;">WSUS </span>
<span style="left:91.84px;top:283.00px;font-size:11.5px;font-weight:400;color:#000;transform:scaleX(0.9293);-webkit-text-stroke:0.22px currentColor;">Connection</span>
<span style="left:58.98px;top:304.00px;font-size:11.5px;font-weight:400;color:#000;transform:scaleX(0.8726);-webkit-text-stroke:0.22px currentColor;">WSUS </span>
<span style="left:91.81px;top:304.00px;font-size:11.5px;font-weight:400;color:#000;transform:scaleX(0.9771);-webkit-text-stroke:0.22px currentColor;">Downstream </span>
<span style="left:158.06px;top:304.00px;font-size:11.5px;font-weight:400;color:#000;transform:scaleX(0.8954);-webkit-text-stroke:0.22px currentColor;">Server </span>
<span style="left:191.23px;top:304.00px;font-size:11.5px;font-weight:400;color:#000;transform:scaleX(0.9457);-webkit-text-stroke:0.22px currentColor;">Configuration</span>
<span style="left:58.97px;top:325.00px;font-size:11.5px;font-weight:400;color:#000;transform:scaleX(0.8806);-webkit-text-stroke:0.22px currentColor;">WSUS </span>
<span style="left:92.15px;top:325.00px;font-size:11.5px;font-weight:400;color:#000;transform:scaleX(0.9113);-webkit-text-stroke:0.22px currentColor;">Package </span>
<span style="left:135.84px;top:325.00px;font-size:11.5px;font-weight:400;color:#000;transform:scaleX(0.9268);-webkit-text-stroke:0.22px currentColor;">Approval</span>
<span style="left:58.97px;top:346.00px;font-size:11.5px;font-weight:400;color:#000;transform:scaleX(0.8806);-webkit-text-stroke:0.22px currentColor;">WSUS </span>
<span style="left:92.15px;top:346.00px;font-size:11.5px;font-weight:400;color:#000;transform:scaleX(0.9113);-webkit-text-stroke:0.22px currentColor;">Package </span>
<span style="left:135.85px;top:346.00px;font-size:11.5px;font-weight:400;color:#000;transform:scaleX(0.9169);-webkit-text-stroke:0.22px currentColor;">Creation</span>
<span style="left:58.97px;top:367.00px;font-size:11.5px;font-weight:400;color:#000;transform:scaleX(0.8806);-webkit-text-stroke:0.22px currentColor;">WSUS </span>
<span style="left:92.15px;top:367.00px;font-size:11.5px;font-weight:400;color:#000;transform:scaleX(0.9113);-webkit-text-stroke:0.22px currentColor;">Package </span>
<span style="left:135.85px;top:367.00px;font-size:11.5px;font-weight:400;color:#000;transform:scaleX(0.9129);-webkit-text-stroke:0.22px currentColor;">Declined</span>
<span style="left:58.97px;top:388.00px;font-size:11.5px;font-weight:400;color:#000;transform:scaleX(0.8806);-webkit-text-stroke:0.22px currentColor;">WSUS </span>
<span style="left:92.15px;top:388.00px;font-size:11.5px;font-weight:400;color:#000;transform:scaleX(0.9113);-webkit-text-stroke:0.22px currentColor;">Package </span>
<span style="left:135.84px;top:388.00px;font-size:11.5px;font-weight:400;color:#000;transform:scaleX(0.9284);-webkit-text-stroke:0.22px currentColor;">Delete</span>
<span style="left:476.94px;top:240.60px;font-size:11.5px;font-weight:400;color:#000;transform:scaleX(0.9277);-webkit-text-stroke:0.22px currentColor;">Name</span>
<span style="left:476.97px;top:263.00px;font-size:11.5px;font-weight:400;color:#000;transform:scaleX(0.8806);-webkit-text-stroke:0.22px currentColor;">WSUS </span>
<span style="left:510.15px;top:263.00px;font-size:11.5px;font-weight:400;color:#000;transform:scaleX(0.9113);-webkit-text-stroke:0.22px currentColor;">Package </span>
<span style="left:553.85px;top:263.00px;font-size:11.5px;font-weight:400;color:#000;transform:scaleX(0.9157);-webkit-text-stroke:0.22px currentColor;">Edit</span>
<span style="left:476.97px;top:284.00px;font-size:11.5px;font-weight:400;color:#000;transform:scaleX(0.8806);-webkit-text-stroke:0.22px currentColor;">WSUS </span>
<span style="left:510.15px;top:284.00px;font-size:11.5px;font-weight:400;color:#000;transform:scaleX(0.9113);-webkit-text-stroke:0.22px currentColor;">Package </span>
<span style="left:553.84px;top:284.00px;font-size:11.5px;font-weight:400;color:#000;transform:scaleX(0.9268);-webkit-text-stroke:0.22px currentColor;">Approval</span>
<span style="left:476.97px;top:305.00px;font-size:11.5px;font-weight:400;color:#000;transform:scaleX(0.8806);-webkit-text-stroke:0.22px currentColor;">WSUS </span>
<span style="left:510.15px;top:305.00px;font-size:11.5px;font-weight:400;color:#000;transform:scaleX(0.9113);-webkit-text-stroke:0.22px currentColor;">Package </span>
<span style="left:553.85px;top:305.00px;font-size:11.5px;font-weight:400;color:#000;transform:scaleX(0.9169);-webkit-text-stroke:0.22px currentColor;">Creation</span>
<span style="left:476.97px;top:326.00px;font-size:11.5px;font-weight:400;color:#000;transform:scaleX(0.8806);-webkit-text-stroke:0.22px currentColor;">WSUS </span>
<span style="left:510.15px;top:326.00px;font-size:11.5px;font-weight:400;color:#000;transform:scaleX(0.9113);-webkit-text-stroke:0.22px currentColor;">Package </span>
<span style="left:553.85px;top:326.00px;font-size:11.5px;font-weight:400;color:#000;transform:scaleX(0.9129);-webkit-text-stroke:0.22px currentColor;">Declined</span>
<span style="left:476.97px;top:347.00px;font-size:11.5px;font-weight:400;color:#000;transform:scaleX(0.8806);-webkit-text-stroke:0.22px currentColor;">WSUS </span>
<span style="left:510.15px;top:347.00px;font-size:11.5px;font-weight:400;color:#000;transform:scaleX(0.9113);-webkit-text-stroke:0.22px currentColor;">Package </span>
<span style="left:553.84px;top:347.00px;font-size:11.5px;font-weight:400;color:#000;transform:scaleX(0.9284);-webkit-text-stroke:0.22px currentColor;">Delete</span>
<span style="left:32.13px;top:455.00px;font-size:11.5px;font-weight:400;color:#000;transform:scaleX(0.9504);-webkit-text-stroke:0.22px currentColor;">How often should </span>
<span style="left:119.60px;top:455.00px;font-size:11.5px;font-weight:400;color:#000;-webkit-text-stroke:0.22px currentColor;">this notification </span>
<span style="left:198.83px;top:455.00px;font-size:11.5px;font-weight:400;color:#000;transform:scaleX(0.9487);-webkit-text-stroke:0.22px currentColor;">rule run? </span>
<span style="left:244.95px;top:455.00px;font-size:11.5px;font-weight:400;color:#000;transform:scaleX(0.9197);-webkit-text-stroke:0.22px currentColor;">Scheduled is </span>
<span style="left:308.43px;top:455.00px;font-size:11.5px;font-weight:400;color:#000;transform:scaleX(0.9470);-webkit-text-stroke:0.22px currentColor;">based on when </span>
<span style="left:385.30px;top:455.00px;font-size:11.5px;font-weight:400;color:#000;-webkit-text-stroke:0.22px currentColor;">the rule is </span>
<span style="left:438.12px;top:455.00px;font-size:11.5px;font-weight:400;color:#000;transform:scaleX(0.9648);-webkit-text-stroke:0.22px currentColor;">saved/modified:</span>
<span style="left:50.94px;top:487.30px;font-size:12.5px;font-weight:400;color:#000;transform:scaleX(0.9377);-webkit-text-stroke:0.22px currentColor;">Daily</span>
<span style="left:240.91px;top:487.30px;font-size:12.5px;font-weight:400;color:#000;-webkit-text-stroke:0.22px currentColor;">09:00</span>
<span style="left:63.74px;top:509.00px;font-size:11.5px;font-weight:400;color:#000;transform:scaleX(0.9398);-webkit-text-stroke:0.22px currentColor;">NOTIFY me when </span>
<span style="left:153.03px;top:509.00px;font-size:11.5px;font-weight:400;color:#000;transform:scaleX(0.9545);-webkit-text-stroke:0.22px currentColor;">the conditions </span>
<span style="left:223.85px;top:509.00px;font-size:11.5px;font-weight:400;color:#000;transform:scaleX(0.9237);-webkit-text-stroke:0.22px currentColor;">are NOT met. </span>
<span style="left:290.90px;top:509.00px;font-size:11.5px;font-weight:400;color:#000;-webkit-text-stroke:0.22px currentColor;">I.e., leave </span>
<span style="left:344.42px;top:509.00px;font-size:11.5px;font-weight:400;color:#000;transform:scaleX(0.9714);-webkit-text-stroke:0.22px currentColor;">unchecked for a </span>
<span style="left:427.03px;top:509.00px;font-size:11.5px;font-weight:400;color:#000;transform:scaleX(0.9559);-webkit-text-stroke:0.22px currentColor;">&#x27;no news is </span>
<span style="left:484.12px;top:509.00px;font-size:11.5px;font-weight:400;color:#000;transform:scaleX(0.9686);-webkit-text-stroke:0.22px currentColor;">good news&#x27; </span>
<span style="left:543.23px;top:509.00px;font-size:11.5px;font-weight:400;color:#000;transform:scaleX(0.9510);-webkit-text-stroke:0.22px currentColor;">policy.</span>
<span style="left:31.93px;top:578.00px;font-size:11.5px;font-weight:400;color:#000;transform:scaleX(0.9471);-webkit-text-stroke:0.22px currentColor;">Select email recipients:</span>
<span style="left:39.00px;top:604.00px;font-size:12px;font-weight:400;color:#808080;">Search...</span>
<span style="left:203.70px;top:603.00px;font-size:11px;font-weight:400;color:#555;">Search</span>
<span style="left:256.90px;top:603.50px;font-size:11px;font-weight:400;color:#222;">Use default recipients defined in Settings page:</span>
<span style="left:36.69px;top:629.30px;font-size:11.5px;font-weight:700;color:#fff;">Available </span>
<span style="left:90.60px;top:629.30px;font-size:11.5px;font-weight:700;color:#fff;">Email </span>
<span style="left:124.40px;top:629.30px;font-size:11.5px;font-weight:700;color:#fff;">Recipients</span>
<span style="left:452.50px;top:629.30px;font-size:11.5px;font-weight:700;color:#fff;">Selected </span>
<span style="left:502.89px;top:629.30px;font-size:11.5px;font-weight:700;color:#fff;transform:scaleX(1.0121);">Email </span>
<span style="left:537.20px;top:629.30px;font-size:11.5px;font-weight:700;color:#fff;">Recipients</span>
<span style="left:58.85px;top:653.60px;font-size:11.5px;font-weight:400;color:#000;transform:scaleX(0.9227);-webkit-text-stroke:0.22px currentColor;">Name</span>
<span style="left:158.64px;top:653.60px;font-size:11.5px;font-weight:400;color:#000;transform:scaleX(0.9416);-webkit-text-stroke:0.22px currentColor;">Email</span>
<span style="left:58.84px;top:697.00px;font-size:11.5px;font-weight:400;color:#000;transform:scaleX(0.9378);-webkit-text-stroke:0.22px currentColor;">Admin</span>
<span style="left:58.86px;top:718.00px;font-size:11.5px;font-weight:400;color:#000;transform:scaleX(0.9081);-webkit-text-stroke:0.22px currentColor;">User</span>
<span style="left:58.84px;top:739.00px;font-size:11.5px;font-weight:400;color:#000;transform:scaleX(0.9365);-webkit-text-stroke:0.22px currentColor;">Single Host</span>
<span style="left:476.94px;top:653.60px;font-size:11.5px;font-weight:400;color:#000;transform:scaleX(0.9277);-webkit-text-stroke:0.22px currentColor;">Name</span>
<span style="left:576.85px;top:653.60px;font-size:11.5px;font-weight:400;color:#000;transform:scaleX(0.9235);-webkit-text-stroke:0.22px currentColor;">Email</span>
<span style="left:476.94px;top:676.00px;font-size:11.5px;font-weight:400;color:#000;transform:scaleX(0.9378);-webkit-text-stroke:0.22px currentColor;">Admin</span>
<span style="left:476.96px;top:697.00px;font-size:11.5px;font-weight:400;color:#000;transform:scaleX(0.9081);-webkit-text-stroke:0.22px currentColor;">User</span>
<span style="left:88.90px;top:776.40px;font-size:11px;font-weight:400;color:#111;">Page</span>
<span style="left:144.20px;top:776.40px;font-size:11px;font-weight:400;color:#111;">1</span>
<span style="left:157.00px;top:776.40px;font-size:11px;font-weight:400;color:#111;">of 2</span>
<span style="left:659.40px;top:776.40px;font-size:11px;font-weight:400;color:#111;">Displaying Available Recipients 1 - 4 of 8</span>
</div></body></html>
